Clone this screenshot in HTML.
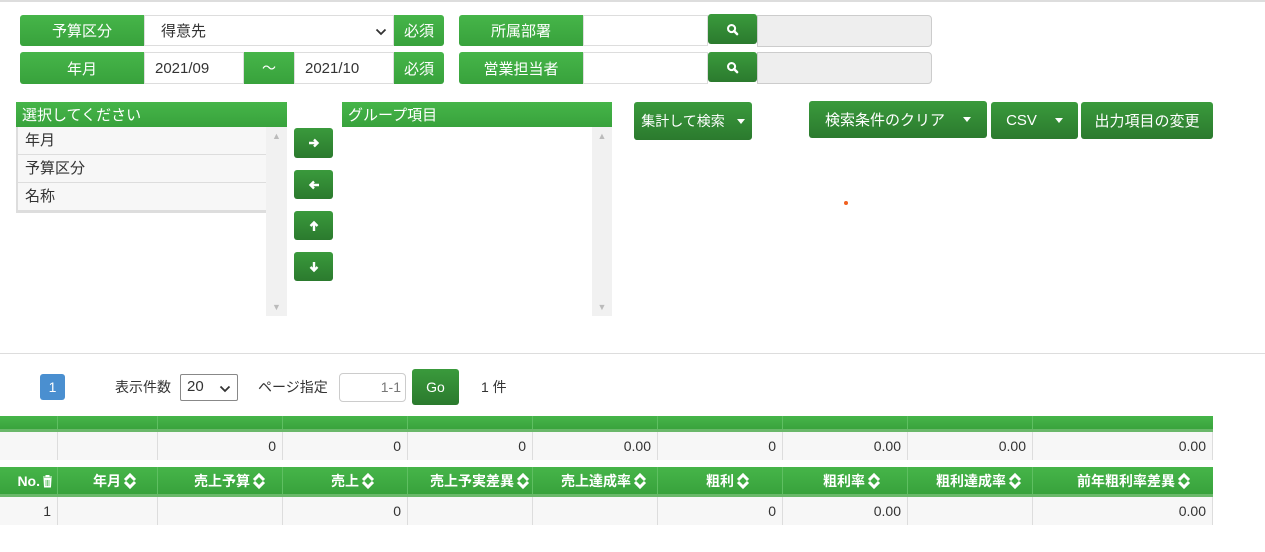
<!DOCTYPE html>
<html><head><meta charset="utf-8"><style>
*{box-sizing:border-box;margin:0;padding:0}
body{width:1265px;height:552px;position:relative;background:#fff;font-family:"Liberation Sans","Noto Sans CJK JP",sans-serif;font-size:14px;color:#333;overflow:hidden}
.a{position:absolute}
.g{background:linear-gradient(#46b549,#38a23c);color:#fff;display:flex;align-items:center;justify-content:center}
.dg{background:linear-gradient(#3a9a3c,#2b7a2e);color:#fff;display:flex;align-items:center;justify-content:center;border-radius:3px;white-space:nowrap}
.inp{background:#fff;border:1px solid #ddd;display:flex;align-items:center;padding-left:10px}
.gr{background:#eee;border:1px solid #ccc;border-radius:0 4px 4px 0}
.li{background:#f7f7f7;border-bottom:1px solid #ddd;padding-left:7px;line-height:27px;height:28px}
.sb{background:#f1f1f1}
.caret{display:inline-block;border-left:4px solid transparent;border-right:4px solid transparent;border-top:5px solid #fff;margin-left:18px}
.row{position:absolute;left:0;display:flex}
.row div{border-right:1px solid #ddd;text-align:right;padding-right:6px}
.hd div{border-right:1px solid #5fbf62;color:#fff;font-weight:bold;display:flex;align-items:center;justify-content:flex-end;padding-right:20px}
.hd svg{margin-left:2px}
.sh div{border-right:1px solid #5fbf62;height:100%}
</style></head><body>
<svg width="0" height="0" style="position:absolute"><defs>
<symbol id="s" viewBox="0 0 14 18"><path d="M2 8 L7 3 L12 8 M2 10 L7 15 L12 10" fill="none" stroke="#fff" stroke-width="3"/></symbol>
<symbol id="q" viewBox="0 0 14 14"><circle cx="6" cy="6" r="3.8" fill="none" stroke="#fff" stroke-width="2.2"/><path d="M8.6 8.6 L12 12" stroke="#fff" stroke-width="2.6" stroke-linecap="round"/></symbol>
<symbol id="v" viewBox="0 0 12 8"><path d="M1.5 1.5 L6 6 L10.5 1.5" fill="none" stroke="#333" stroke-width="1.8"/></symbol>
</defs></svg>
<div class="a" style="left:0;top:0;width:1265px;height:2px;background:#ddd"></div>
<div class="a g" style="left:20px;top:15px;width:124px;height:31px;border-radius:3px 0 0 3px;font-size:15px">予算区分</div>
<div class="a inp" style="left:144px;top:15px;width:250px;height:31px;padding-left:16px;font-size:15px">得意先<svg style="position:absolute;right:6px;top:12px" width="12" height="8"><use href="#v"/></svg></div>
<div class="a g" style="left:394px;top:15px;width:50px;height:31px;border-radius:0 3px 3px 0;font-size:15px">必須</div>
<div class="a g" style="left:20px;top:52px;width:124px;height:32px;border-radius:3px 0 0 3px;font-size:15px">年月</div>
<div class="a inp" style="left:144px;top:52px;width:100px;height:32px;font-size:15px">2021/09</div>
<div class="a g" style="left:244px;top:52px;width:50px;height:32px">～</div>
<div class="a inp" style="left:294px;top:52px;width:100px;height:32px;font-size:15px">2021/10</div>
<div class="a g" style="left:394px;top:52px;width:50px;height:32px;border-radius:0 3px 3px 0;font-size:15px">必須</div>
<div class="a g" style="left:459px;top:15px;width:124px;height:31px;border-radius:3px 0 0 3px;font-size:15px">所属部署</div>
<div class="a inp" style="left:583px;top:15px;width:125px;height:31px"></div>
<div class="a dg" style="left:708px;top:14px;width:49px;height:30px"><svg width="13" height="13"><use href="#q"/></svg></div>
<div class="a gr" style="left:757px;top:15px;width:175px;height:32px"></div>
<div class="a g" style="left:459px;top:52px;width:124px;height:32px;border-radius:3px 0 0 3px;font-size:15px">営業担当者</div>
<div class="a inp" style="left:583px;top:52px;width:125px;height:32px"></div>
<div class="a dg" style="left:708px;top:52px;width:49px;height:30px"><svg width="13" height="13"><use href="#q"/></svg></div>
<div class="a gr" style="left:757px;top:52px;width:175px;height:32px"></div>
<div class="a g" style="left:16px;top:102px;width:271px;height:25px;justify-content:flex-start;padding-left:6px;font-size:15px">選択してください</div>
<div class="a" style="left:16px;top:127px;width:250px;border-left:2px solid #ddd;border-bottom:2px solid #ddd;font-size:15px">
<div class="li">年月</div><div class="li">予算区分</div><div class="li">名称</div></div>
<div class="a sb" style="left:266px;top:127px;width:21px;height:189px;color:#bbb;font-size:9px;text-align:center"><div style="margin-top:4px">▲</div><div style="position:absolute;bottom:4px;width:100%">▼</div></div>
<div class="a g" style="left:342px;top:102px;width:270px;height:25px;justify-content:flex-start;padding-left:6px;font-size:15px">グループ項目</div>
<div class="a sb" style="left:592px;top:127px;width:20px;height:189px;color:#bbb;font-size:9px;text-align:center"><div style="margin-top:4px">▲</div><div style="position:absolute;bottom:4px;width:100%">▼</div></div>
<div class="a dg" style="left:294px;top:128px;width:39px;height:30px"><svg width="12" height="12" viewBox="0 0 12 12"><path d="M1 6H9M6 2.5L9.5 6L6 9.5" fill="none" stroke="#fff" stroke-width="2.4"/></svg></div>
<div class="a dg" style="left:294px;top:170px;width:39px;height:29px"><svg width="12" height="12" viewBox="0 0 12 12"><path d="M11 6H3M6 2.5L2.5 6L6 9.5" fill="none" stroke="#fff" stroke-width="2.4"/></svg></div>
<div class="a dg" style="left:294px;top:211px;width:39px;height:29px"><svg width="12" height="12" viewBox="0 0 12 12"><path d="M6 11V3M2.5 6L6 2.5L9.5 6" fill="none" stroke="#fff" stroke-width="2.4"/></svg></div>
<div class="a dg" style="left:294px;top:252px;width:39px;height:29px"><svg width="12" height="12" viewBox="0 0 12 12"><path d="M6 1V9M2.5 6L6 9.5L9.5 6" fill="none" stroke="#fff" stroke-width="2.4"/></svg></div>
<div class="a dg" style="left:634px;top:102px;width:118px;height:38px;font-size:14px">集計して検索<span class="caret" style="margin-left:12px"></span></div>
<div class="a dg" style="left:809px;top:101px;width:178px;height:37px;font-size:15px">検索条件のクリア<span class="caret"></span></div>
<div class="a dg" style="left:991px;top:102px;width:87px;height:37px;font-size:15px">CSV<span class="caret"></span></div>
<div class="a dg" style="left:1081px;top:102px;width:132px;height:37px;font-size:15px">出力項目の変更</div>
<div class="a" style="left:844px;top:201px;width:4px;height:4px;border-radius:2px;background:#f06020"></div>
<div class="a" style="left:0;top:353px;width:1265px;height:1px;background:#ddd"></div>
<div class="a" style="left:40px;top:374px;width:25px;height:26px;background:#4a8fd0;color:#fff;border-radius:3px;text-align:center;line-height:26px">1</div>
<div class="a" style="left:115px;top:377px">表示件数</div>
<div class="a" style="left:180px;top:374px;width:58px;height:27px;border:1px solid #888;border-radius:2px;padding:3px 0 0 6px;font-size:15px">20<svg style="position:absolute;right:6px;top:10px" width="12" height="8"><use href="#v"/></svg></div>
<div class="a" style="left:258px;top:377px">ページ指定</div>
<div class="a" style="left:339px;top:373px;width:67px;height:29px;border:1px solid #ccc;border-radius:4px;text-align:right;padding:5px 4px 0 0;color:#777">1-1</div>
<div class="a dg" style="left:412px;top:369px;width:47px;height:36px">Go</div>
<div class="a" style="left:481px;top:377px">1 件</div>
<div class="row sh" style="top:416px;width:1213px;height:16px;background:linear-gradient(#46b549,#3aa33d);border-bottom:3px solid #6ab86a">
<div style="width:58px"></div><div style="width:100px"></div><div style="width:125px"></div><div style="width:125px"></div><div style="width:125px"></div><div style="width:125px"></div><div style="width:125px"></div><div style="width:125px"></div><div style="width:125px"></div><div style="width:180px;border:0"></div></div>
<div class="row" style="top:432px;height:28px;background:#f7f7f7;line-height:28px">
<div style="width:58px"></div><div style="width:100px"></div><div style="width:125px">0</div><div style="width:125px">0</div><div style="width:125px">0</div><div style="width:125px">0.00</div><div style="width:125px">0</div><div style="width:125px">0.00</div><div style="width:125px">0.00</div><div style="width:180px">0.00</div></div>
<div class="row hd" style="top:467px;height:30px;background:linear-gradient(#46b549,#38a23c);border-bottom:3px solid #6ab86a;width:1213px">
<div style="width:58px;padding-right:4px">No.<svg width="11" height="14" viewBox="0 0 11 14"><path d="M1 3H10M4 3V1.5H7V3M2 4.5H9L8.5 13H2.5Z" fill="#fff" stroke="#fff" stroke-width="1"/><path d="M4 6V12M5.5 6V12M7 6V12" stroke="#46b549" stroke-width="0.7"/></svg></div>
<div style="width:100px;padding-right:20px">年月<svg width="14" height="18"><use href="#s"/></svg></div>
<div style="width:125px;padding-right:16px">売上予算<svg width="14" height="18"><use href="#s"/></svg></div>
<div style="width:125px;padding-right:32px">売上<svg width="14" height="18"><use href="#s"/></svg></div>
<div style="width:125px;padding-right:2px">売上予実差異<svg width="14" height="18"><use href="#s"/></svg></div>
<div style="width:125px;padding-right:10px">売上達成率<svg width="14" height="18"><use href="#s"/></svg></div>
<div style="width:125px;padding-right:32px">粗利<svg width="14" height="18"><use href="#s"/></svg></div>
<div style="width:125px;padding-right:26px">粗利率<svg width="14" height="18"><use href="#s"/></svg></div>
<div style="width:125px;padding-right:10px">粗利達成率<svg width="14" height="18"><use href="#s"/></svg></div>
<div style="width:180px;padding-right:22px;border:0">前年粗利率差異<svg width="14" height="18"><use href="#s"/></svg></div></div>
<div class="row" style="top:497px;height:28px;background:#f7f7f7;line-height:28px">
<div style="width:58px">1</div><div style="width:100px"></div><div style="width:125px"></div><div style="width:125px">0</div><div style="width:125px"></div><div style="width:125px"></div><div style="width:125px">0</div><div style="width:125px">0.00</div><div style="width:125px"></div><div style="width:180px">0.00</div></div>
</body></html>
